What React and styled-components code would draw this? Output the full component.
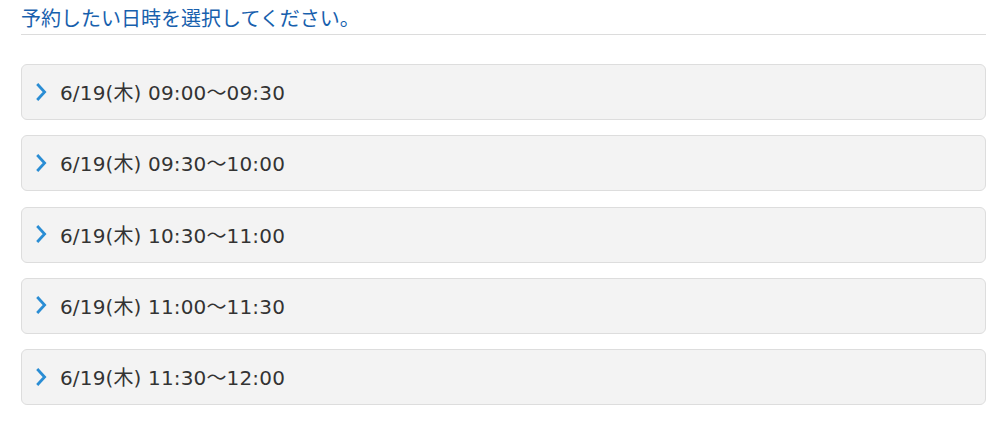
import React from 'react'
import styled, { createGlobalStyle } from 'styled-components';

const GlobalStyle = createGlobalStyle`
    body {
        margin: 0;
        background: #fff;
        font-family: "DejaVu Sans", "Noto Sans CJK JP", sans-serif;
    }
`;

const slots = [
    '09:00～09:30',
    '09:30～10:00',
    '10:30～11:00',
    '11:00～11:30',
    '11:30～12:00',
];

function App() {
    return (
        <PageStyled>
            <GlobalStyle />
            <h2 className="title">予約したい日時を選択してください。</h2>
            <ul className="slots">
                {slots.map((time) => (
                    <li className="slot" key={time}>
                        <svg className="chevron" width="12" height="20" viewBox="0 0 12 20">
                            <path d="M2.2 2 L9.6 10 L2.2 18" fill="none" stroke="#2a8dd4" strokeWidth="2.8" />
                        </svg>
                        <span>6/19(木) {time}</span>
                    </li>
                ))}
            </ul>
        </PageStyled>
    )
}

const PageStyled = styled.div`
    padding: 6px 14px 0 21px;
    .title{
        margin: 0;
        padding-bottom: 4px;
        border-bottom: 1px solid #dcdcdc;
        font-family: "Noto Sans CJK JP", sans-serif;
        font-weight: 400;
        font-size: 20px;
        line-height: 24px;
        color: #1760ad;
    }
    .slots{
        list-style: none;
        margin: 29px 0 0;
        padding: 0;
        display: flex;
        flex-direction: column;
        gap: 15.3px;
    }
    .slot{
        display: flex;
        align-items: center;
        gap: 13px;
        height: 56px;
        box-sizing: border-box;
        padding: 0 0 1px 13px;
        background: #f3f3f3;
        border: 1px solid #dddddd;
        border-radius: 6px;
        font-size: 20px;
        letter-spacing: 0.15px;
        color: #333;
        .chevron{
            flex: none;
        }
    }
`;

export default App;
